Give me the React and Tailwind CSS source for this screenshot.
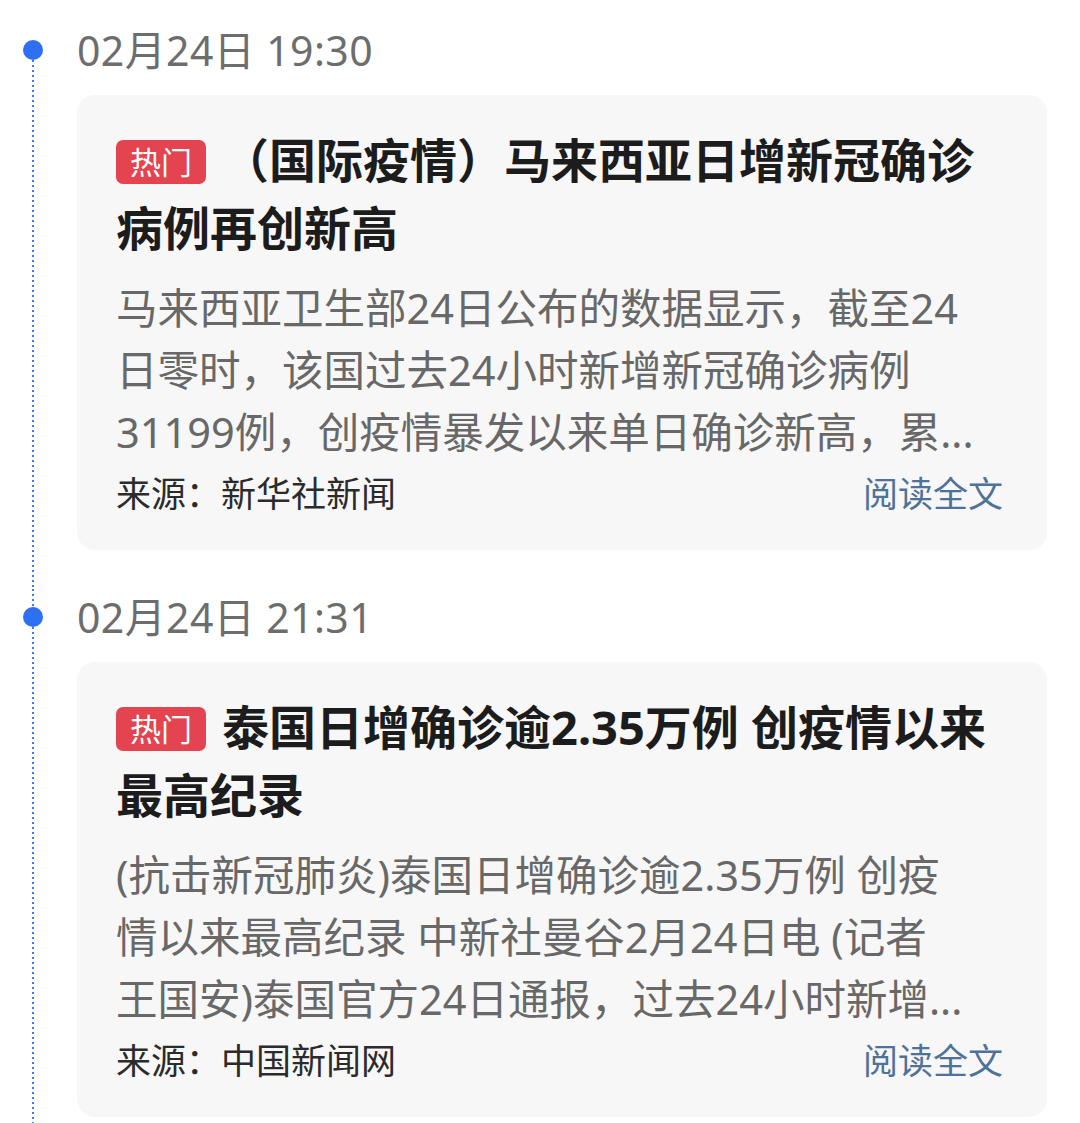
import React from "react";

const items = [
  {
    time: "02月24日 19:30",
    title: "（国际疫情）马来西亚日增新冠确诊病例再创新高",
    body: [
      "马来西亚卫生部24日公布的数据显示，截至24",
      "日零时，该国过去24小时新增新冠确诊病例",
      "31199例，创疫情暴发以来单日确诊新高，累...",
    ],
    source: "新华社新闻",
  },
  {
    time: "02月24日 21:31",
    title: "泰国日增确诊逾2.35万例 创疫情以来最高纪录",
    body: [
      "(抗击新冠肺炎)泰国日增确诊逾2.35万例 创疫",
      "情以来最高纪录 中新社曼谷2月24日电 (记者",
      "王国安)泰国官方24日通报，过去24小时新增...",
    ],
    source: "中国新闻网",
  },
];

const lineCls =
  "w-[2px] bg-[linear-gradient(to_bottom,#3f7bf0_40%,transparent_40%)] bg-[length:2px_5px]";

function Item({ item, first }) {
  return (
    <div className="flex">
      <div className="w-[66px] flex flex-col items-center shrink-0">
        <div className={first ? "h-[18px]" : `h-[18px] ${lineCls}`} />
        <div className="w-[20px] h-[20px] rounded-full bg-[#2f6ff1] shrink-0" />
        <div className={`flex-1 ${lineCls}`} />
      </div>
      <div className="flex-1 ml-[11px] mr-[33px] pb-[39px]">
        <div className="h-[56px] flex items-center text-[41px] leading-none text-[#6d6d6d] tracking-[0.4px] mb-[17px]">
          {item.time}
        </div>
        <div className="bg-[#f7f7f7] rounded-[18px] pl-[39px] pr-[44px] pt-[31px] pb-[31px]">
          <div className="text-[47px] leading-[68px] font-bold text-[#1c1c1c]">
            <span className="inline-flex items-center justify-center align-middle bg-[#e4444f] text-white font-normal text-[31px] leading-none w-[90px] h-[44px] rounded-[7px] mr-[16px] relative -top-[3px]">
              热门
            </span>
            <span>{item.title}</span>
          </div>
          <div className="mt-[15px] text-[41.5px] leading-[62px] text-[#686868]">
            {item.body.map((l, i) => (
              <div key={i} className="whitespace-nowrap">{l}</div>
            ))}
          </div>
          <div className="flex items-center justify-between h-[50px] mt-[6px]">
            <span className="text-[35px] text-[#2b2b2b]">来源：{item.source}</span>
            <span className="text-[35px] text-[#4f7298]">阅读全文</span>
          </div>
        </div>
      </div>
    </div>
  );
}

export default function App() {
  return (
    <div
      className="bg-white w-[1080px] h-[1123px] overflow-hidden pt-[22px]"
      style={{ fontFamily: '"Noto Sans", "Noto Sans CJK SC", sans-serif' }}
    >
      {items.map((it, i) => (
        <Item key={i} item={it} first={i === 0} />
      ))}
    </div>
  );
}
